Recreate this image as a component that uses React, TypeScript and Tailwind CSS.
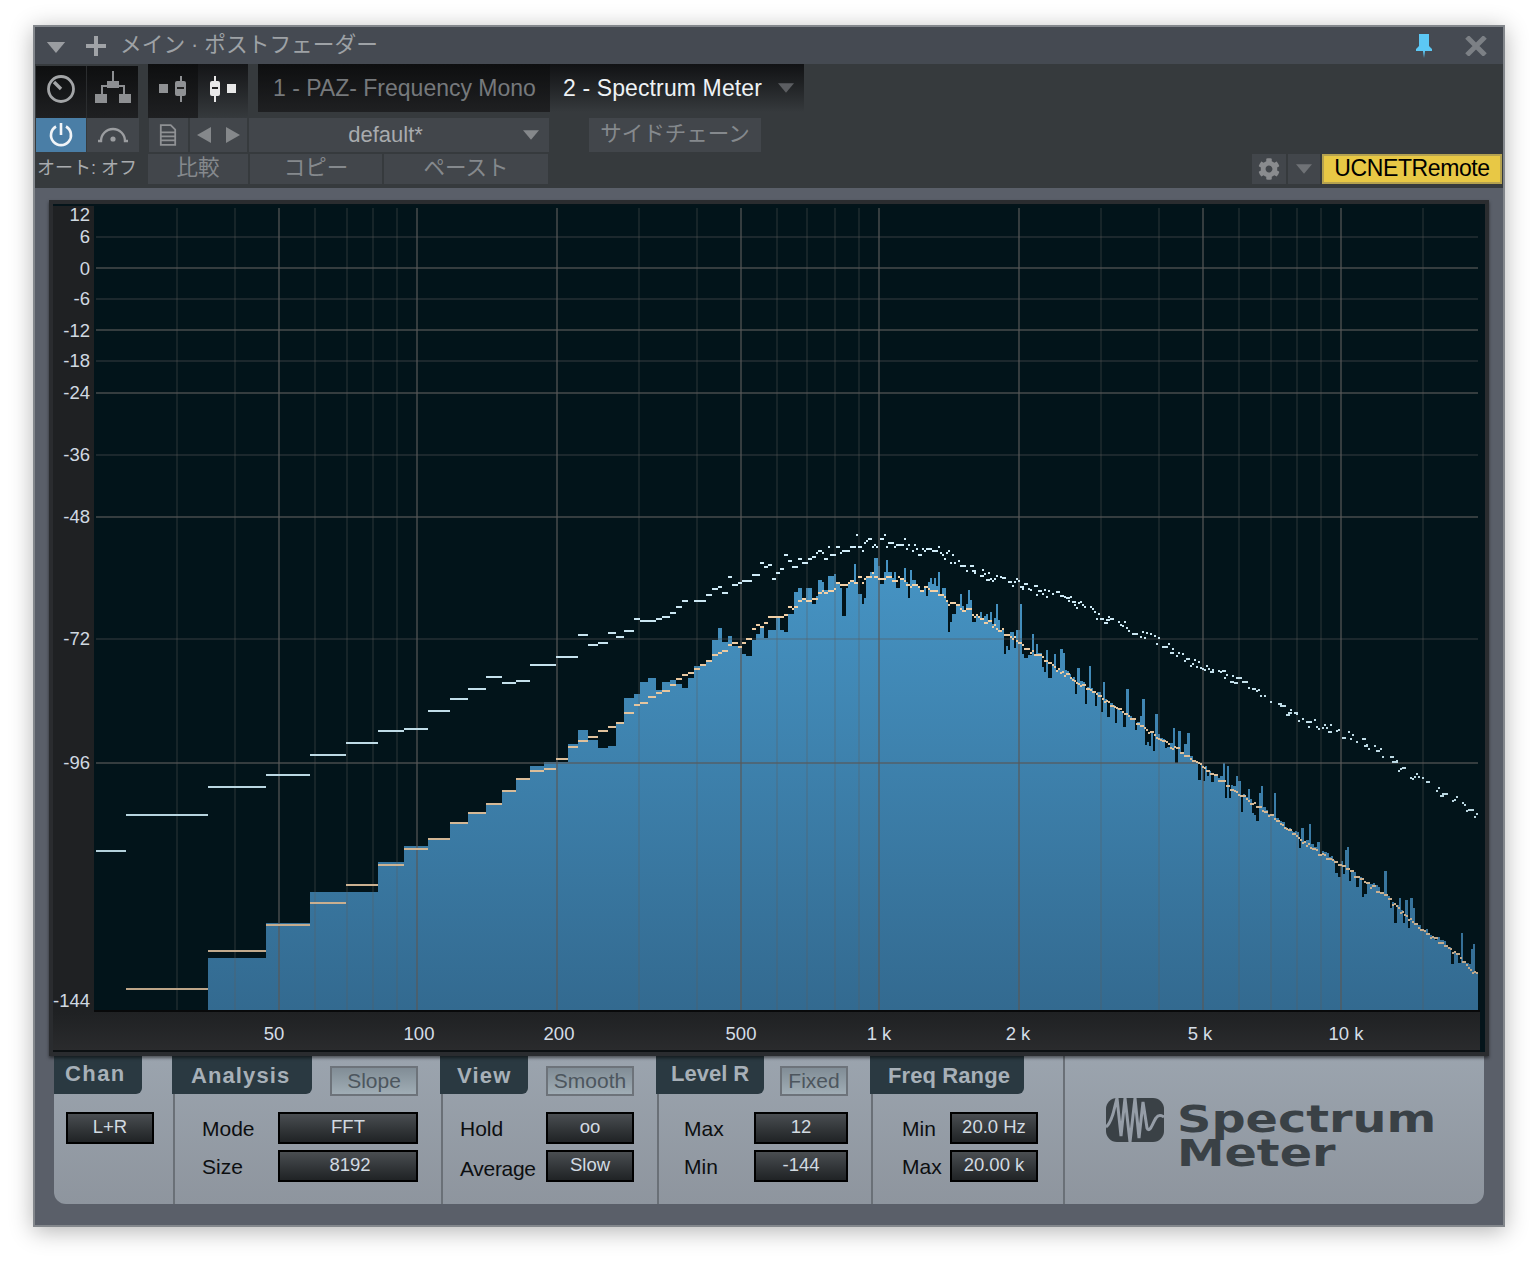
import React from "react";
import { FaCog } from "react-icons/fa";

const GRID_MINOR = [177, 235, 315, 347, 373, 397, 639, 697, 777, 807, 835, 859, 1101, 1159, 1239, 1271, 1297, 1321, 1423];
const GRID_MAJOR = [279, 417, 557, 741, 879, 1019, 1203, 1341];
const H_MINOR = [237, 299, 361, 455, 639];
const H_MAJOR = [268, 330, 393, 517, 763];
const Y_LABELS: [string, number][] = [["12", 215], ["6", 237], ["0", 269], ["-6", 299], ["-12", 331], ["-18", 361], ["-24", 393], ["-36", 455], ["-48", 517], ["-72", 639], ["-96", 763], ["-144", 1001]];
const X_LABELS: [string, number][] = [["50", 274], ["100", 419], ["200", 559], ["500", 741], ["1 k", 879], ["2 k", 1018], ["5 k", 1200], ["10 k", 1346]];

// blue: [xStart, top]
const BLUE_LOW: number[][] = [[208, 958], [266, 923], [310, 892], [378, 862], [404, 846], [428, 838], [450, 822], [468, 813], [486, 803], [502, 791], [516, 778], [530, 766], [544, 762], [568, 744], [578, 730], [588, 740], [598, 748], [608, 746], [616, 724], [624, 698], [634, 694], [640, 682], [648, 678], [656, 690], [662, 682], [670, 680], [676, 684], [682, 688], [688, 678], [694, 666], [700, 665], [706, 661]];
// zoomed 3x from (700,520)
const BLUE_Z = [36, 360, 54, 324, 66, 366, 84, 348, 96, 378, 126, 402, 138, 408, 156, 360, 168, 342, 180, 318, 192, 354, 204, 330, 228, 294, 240, 330, 252, 336, 264, 282, 282, 216, 294, 204, 306, 240, 318, 204, 336, 252, 348, 228, 354, 180, 366, 186, 372, 210, 384, 168, 402, 162, 408, 186, 420, 204, 426, 288, 438, 204, 444, 186, 450, 180, 462, 132, 468, 186, 474, 222, 486, 252, 492, 234, 498, 174, 510, 156, 522, 114, 534, 138, 540, 192, 552, 156, 558, 120, 564, 156, 576, 174, 582, 156, 588, 204, 600, 180, 612, 144, 618, 186, 624, 234, 630, 150, 636, 180, 648, 198, 660, 216, 672, 198, 678, 228, 684, 186, 690, 174, 696, 192, 702, 174, 708, 198, 714, 156, 720, 222, 726, 204, 738, 240, 744, 336, 750, 306, 756, 282, 768, 252, 780, 222, 786, 258, 792, 276, 798, 252, 804, 210, 810, 240, 816, 306, 828, 288, 840, 276, 846, 294, 852, 288, 858, 282, 864, 300, 870, 276, 876, 312, 882, 294, 888, 252, 894, 300, 900, 330, 912, 402, 918, 378, 924, 390, 930, 336, 942, 384, 948, 330, 954, 330, 960, 252, 966, 402, 972, 414, 984, 405, 996, 342, 1002, 408, 1008, 372, 1014, 400, 1026, 440, 1032, 456, 1038, 390, 1044, 474, 1056, 438, 1062, 402, 1068, 456, 1074, 444];

const ORANGE_LOW: number[][] = [[126, 208, 989], [208, 266, 951], [266, 310, 925], [310, 346, 903], [346, 378, 885], [378, 404, 865], [404, 428, 849], [428, 450, 839], [450, 468, 823], [468, 486, 813], [486, 502, 804], [502, 516, 791], [516, 530, 779], [530, 544, 771], [544, 556, 769], [556, 568, 759], [568, 578, 747], [578, 588, 741], [588, 598, 737], [598, 608, 731], [608, 616, 727], [616, 624, 723], [624, 634, 713], [634, 640, 705], [640, 648, 703], [648, 656, 697], [656, 662, 693], [662, 670, 691], [670, 676, 685], [676, 682, 679], [682, 688, 675], [688, 694, 673], [694, 700, 669]];
const ORANGE_Z = [0, 18, 435, 18, 36, 423, 36, 54, 405, 54, 66, 399, 66, 84, 393, 84, 96, 375, 96, 114, 369, 114, 126, 381, 126, 138, 369, 138, 156, 357, 156, 168, 327, 168, 180, 315, 180, 192, 321, 192, 204, 309, 204, 252, 291, 252, 264, 285, 264, 276, 261, 276, 282, 267, 282, 294, 261, 294, 306, 243, 306, 318, 237, 318, 336, 243, 336, 354, 237, 354, 366, 219, 366, 372, 213, 372, 384, 219, 384, 402, 213, 402, 408, 207, 408, 420, 189, 420, 444, 195, 444, 450, 189, 450, 462, 183, 462, 474, 189, 474, 486, 171, 486, 492, 189, 492, 498, 177, 498, 516, 171, 516, 522, 159, 522, 534, 171, 534, 558, 177, 558, 576, 171, 576, 594, 183, 594, 600, 171, 600, 612, 177, 612, 618, 183, 618, 630, 195, 630, 636, 201, 636, 654, 195, 654, 660, 201, 660, 672, 213, 672, 684, 201, 684, 690, 207, 690, 714, 213, 714, 732, 225, 732, 738, 231, 738, 744, 243, 744, 750, 255, 750, 768, 249, 768, 780, 255, 780, 786, 267, 786, 798, 273, 798, 816, 267, 816, 822, 285, 822, 828, 291, 828, 834, 285, 834, 840, 291, 840, 852, 297, 852, 864, 309, 864, 876, 303, 876, 882, 321, 882, 888, 315, 888, 894, 327, 894, 906, 333, 906, 912, 327, 912, 930, 345, 930, 936, 351, 936, 942, 357, 942, 948, 351, 948, 954, 363, 954, 966, 369, 966, 972, 375, 972, 990, 387, 990, 996, 399, 996, 1002, 393, 1002, 1008, 405, 1008, 1026, 405, 1026, 1032, 411, 1032, 1044, 423, 1044, 1056, 429, 1056, 1062, 435, 1062, 1068, 441, 1068, 1074, 453, 1074, 1080, 447];

const WHITE_LOW: number[][] = [[96, 126, 851], [126, 208, 815], [208, 266, 787], [266, 310, 775], [310, 346, 755], [346, 378, 743], [378, 404, 731], [404, 428, 729], [428, 450, 711], [450, 468, 699], [468, 486, 689], [486, 502, 677], [502, 516, 683], [516, 530, 681], [530, 556, 665], [556, 578, 657], [578, 588, 635], [588, 598, 645], [598, 608, 643], [608, 616, 633], [616, 624, 637], [624, 634, 631], [634, 640, 619], [640, 656, 621], [656, 662, 619], [662, 670, 617], [670, 676, 613], [676, 682, 607], [682, 688, 601], [694, 700, 601]];
const WHITE_Z = [0, 18, 243, 18, 36, 225, 36, 54, 207, 54, 66, 201, 66, 84, 219, 84, 96, 171, 96, 114, 195, 114, 126, 189, 126, 156, 183, 156, 180, 165, 180, 192, 129, 192, 204, 141, 204, 216, 135, 216, 228, 177, 228, 240, 159, 240, 252, 147, 252, 264, 105, 264, 276, 123, 276, 294, 141, 294, 306, 117, 306, 324, 129, 324, 336, 117, 336, 348, 111, 348, 354, 99, 354, 366, 93, 366, 372, 99, 372, 384, 117, 384, 390, 81, 390, 408, 105, 408, 420, 81, 420, 426, 99, 426, 450, 93, 450, 468, 81, 468, 474, 45, 474, 486, 81, 486, 492, 93, 492, 498, 69, 498, 504, 63, 504, 516, 57, 516, 522, 81, 522, 528, 75, 528, 534, 81, 540, 552, 57, 552, 558, 45, 558, 564, 81, 564, 582, 69, 582, 588, 81, 588, 612, 75, 612, 618, 57, 618, 624, 87, 624, 630, 75, 636, 642, 93, 642, 648, 75, 648, 654, 87, 654, 666, 105, 666, 672, 87, 672, 678, 93, 678, 696, 87, 696, 714, 93, 714, 720, 81, 720, 726, 99, 726, 732, 105, 732, 738, 117, 738, 744, 99, 744, 750, 93, 750, 756, 129, 756, 762, 105, 762, 768, 129];

const ORANGE_CURVE = [[1060, 671], [1080, 685], [1100, 697], [1113, 707], [1133, 720], [1160, 740], [1187, 757], [1203, 768], [1239, 795], [1271, 817], [1297, 837], [1321, 855], [1341, 866], [1380, 893], [1423, 932], [1440, 943], [1455, 953], [1478, 977]];
const WHITE_CURVE = [[957, 565], [1000, 581], [1019, 584], [1033, 590], [1050, 594], [1073, 602], [1100, 617], [1117, 623], [1140, 634], [1160, 642], [1180, 657], [1200, 667], [1220, 672], [1240, 683], [1260, 695], [1300, 720], [1327, 728], [1363, 742], [1380, 753], [1400, 768], [1433, 788], [1453, 797], [1478, 817]];

function interp(c: number[][], x: number) {
  for (let i = 1; i < c.length; i++) {
    if (x <= c[i][0]) {
      const t = (x - c[i - 1][0]) / (c[i][0] - c[i - 1][0]);
      return c[i - 1][1] + t * (c[i][1] - c[i - 1][1]);
    }
  }
  return c[c.length - 1][1];
}

function buildChart() {
  let seed = 12345;
  const rnd = () => {
    seed = (seed * 1664525 + 1013904223) % 4294967296;
    return seed / 4294967296;
  };
  const blue: number[][] = [...BLUE_LOW];
  for (let i = 0; i < BLUE_Z.length; i += 2) blue.push([700 + BLUE_Z[i] / 3, 520 + BLUE_Z[i + 1] / 3]);
  let x = 1060;
  while (x < 1478) {
    const w = rnd() < 0.4 ? 3 : 2;
    const base = interp(ORANGE_CURVE, x);
    const r = rnd();
    let top = base - 5 + rnd() * 5;
    if (r < 0.18) top = base - 9 - rnd() * 20;
    else if (r < 0.4) top = base + 3 + rnd() * 14;
    blue.push([x, Math.round(top)]);
    x += w;
  }
  let bluePath = "M208 1010";
  blue.forEach((b, i) => {
    const end = i + 1 < blue.length ? blue[i + 1][0] : 1478;
    bluePath += ` L${b[0]} ${b[1]} L${end} ${b[1]}`;
  });
  bluePath += " L1478 1010 Z";

  const seg = (a: number, b: number, y: number) => `M${a} ${y - 1}H${b}V${y + 1}H${a}Z`;
  let orange = ORANGE_LOW.map((o) => seg(o[0], o[1], o[2])).join("");
  for (let i = 0; i < ORANGE_Z.length; i += 3) orange += seg(700 + ORANGE_Z[i] / 3, 700 + ORANGE_Z[i + 1] / 3, 520 + ORANGE_Z[i + 2] / 3);
  x = 1060;
  while (x < 1478) {
    const w = rnd() < 0.35 ? 4 : 2;
    const y = Math.round(interp(ORANGE_CURVE, x) + (rnd() - 0.5) * 4);
    orange += seg(x, Math.min(x + w, 1478), y);
    x += w;
  }

  let white = WHITE_LOW.map((o) => seg(o[0], o[1], o[2])).join("");
  for (let i = 0; i < WHITE_Z.length; i += 3) white += seg(700 + WHITE_Z[i] / 3, 700 + WHITE_Z[i + 1] / 3, 520 + WHITE_Z[i + 2] / 3);
  x = 958;
  while (x < 1478) {
    const y = Math.round(interp(WHITE_CURVE, x) + (rnd() - 0.5) * 9);
    if (rnd() < 0.72) white += seg(x, x + (rnd() < 0.22 ? 4 : 2), y);
    x += 2;
  }
  return { bluePath, orange, white };
}

const CHART = buildChart();

function Chart() {
  return (
    <svg className="block w-[1386px] h-[806px]" viewBox="94 206 1386 806" shapeRendering="crispEdges">
      <defs>
        <linearGradient id="blueFill" gradientUnits="userSpaceOnUse" x1="0" y1="560" x2="0" y2="1010">
          <stop offset="0" stopColor="#4694c4" />
          <stop offset="1" stopColor="#336a90" />
        </linearGradient>
        <linearGradient id="orangeFill" gradientUnits="userSpaceOnUse" x1="0" y1="560" x2="0" y2="1000">
          <stop offset="0" stopColor="#f8d5aa" />
          <stop offset="1" stopColor="#bba488" />
        </linearGradient>
        <linearGradient id="whiteFill" gradientUnits="userSpaceOnUse" x1="0" y1="540" x2="0" y2="860">
          <stop offset="0" stopColor="#d2eefa" />
          <stop offset="1" stopColor="#b2d0da" />
        </linearGradient>
      </defs>
      <rect x="94" y="206" width="1386" height="804" fill="#02141a" />
      <path d={CHART.bluePath} fill="url(#blueFill)" />
      {GRID_MINOR.map((x) => (
        <rect key={x} x={x - 1} y="208" width="2" height="802" fill="#5a5a5a" fillOpacity="0.24" />
      ))}
      {GRID_MAJOR.map((x) => (
        <rect key={x} x={x - 1} y="208" width="2" height="802" fill="#585858" fillOpacity="0.6" />
      ))}
      {H_MINOR.map((y) => (
        <rect key={y} x="96" y={y - 1} width="1382" height="2" fill="#5a5a5a" fillOpacity="0.3" />
      ))}
      {H_MAJOR.map((y) => (
        <rect key={y} x="96" y={y - 1} width="1382" height="2" fill="#585858" fillOpacity="0.6" />
      ))}
      <path d={CHART.orange} fill="url(#orangeFill)" />
      <path d={CHART.white} fill="url(#whiteFill)" />
      <rect x="94" y="1010" width="1386" height="2" fill="#08090a" />
    </svg>
  );
}

const Tri = ({ className }: { className: string }) => (
  <svg className={className} viewBox="0 0 20 12">
    <path d="M0 0H20L10 12Z" fill="currentColor" />
  </svg>
);

function Fader({ on }: { on?: boolean }) {
  const c = on ? "#e8e8e8" : "#8f9194";
  return (
    <svg className="w-[34px] h-[28px]" viewBox="0 0 34 28">
      {on ? (
        <g>
          <rect x="8" y="1" width="2" height="26" fill={c} />
          <rect x="4" y="6" width="10" height="15" rx="2" fill={c} />
          <rect x="6" y="12" width="6" height="2" fill="#222" />
          <rect x="21" y="9" width="9" height="9" fill={c} />
        </g>
      ) : (
        <g>
          <rect x="3" y="9" width="9" height="9" fill={c} />
          <rect x="24" y="1" width="2" height="26" fill={c} />
          <rect x="19" y="6" width="11" height="15" rx="2" fill={c} />
          <rect x="21" y="12" width="7" height="2" fill="#222" />
        </g>
      )}
    </svg>
  );
}

function Toolbar() {
  const btn = "bg-[#42464b] flex items-center justify-center";
  const cjk = "text-[21.5px] pb-[2px] text-[#85898d]";
  return (
    <div className="h-[124px] bg-[#363a3d] pl-px flex flex-col">
      <div className="flex h-[54px] items-start">
        <div className="flex w-[102px] h-[54px] bg-gradient-to-b from-[#0e0f10] to-[#1f2022] border-t-2 border-[#363a3d]">
          <div className="w-[51px] flex items-center justify-center border-r border-[#2b2d2f] pb-[6px]">
            <svg className="w-[30px] h-[30px]" viewBox="0 0 30 30" fill="none" stroke="#a3a5a7" strokeWidth="2.8">
              <circle cx="15" cy="15" r="12.5" />
              <path d="M8 8L15 15" strokeWidth="3.4" />
            </svg>
          </div>
          <div className="w-[51px] flex items-center justify-center pb-[8px]">
            <svg className="w-[38px] h-[34px]" viewBox="0 0 38 34" fill="#8d8f92">
              <rect x="18" y="0" width="2" height="12" />
              <rect x="13" y="10" width="12" height="7" />
              <rect x="7" y="14" width="24" height="2" />
              <rect x="7" y="14" width="2" height="10" />
              <rect x="29" y="14" width="2" height="10" />
              <rect x="1" y="23" width="12" height="9" />
              <rect x="25" y="23" width="12" height="9" />
            </svg>
          </div>
        </div>
        <div className="flex ml-[10px] h-[54px] w-[100px]">
          <div className="w-[50px] flex items-center justify-center bg-gradient-to-b from-[#0e0f10] to-[#1f2022] pb-[4px]">
            <Fader />
          </div>
          <div className="w-[50px] flex items-center justify-center bg-gradient-to-b from-[#141517] to-[#363a3d] pb-[4px]">
            <Fader on />
          </div>
        </div>
        <div className="flex ml-[10px]">
          <div className="w-[292px] h-[48px] bg-gradient-to-b from-[#0e0f10] to-[#1f2022] pl-[15px] flex items-center text-[23px] text-[#76797c]">
            1 - PAZ- Frequency Mono
          </div>
          <div className="w-[254px] h-[48px] bg-gradient-to-b from-[#111214] to-[#363a3d] pl-[13px] flex items-center text-[23px] text-[#eef2f5] tracking-[0.12px]">
            2 - Spectrum Meter
            <Tri className="w-[16px] h-[10px] ml-[16px] text-[#5c5e62]" />
          </div>
        </div>
      </div>
      <div className="flex h-[34px]">
        <div className="w-[50px] bg-[#4a7ea6] flex items-center justify-center">
          <svg className="w-[26px] h-[26px]" viewBox="0 0 26 26" fill="none" stroke="#f0f4f7" strokeWidth="2.6">
            <path d="M8 4.5A10 10 0 1 0 18 4.5" />
            <path d="M13 1V13" />
          </svg>
        </div>
        <div className={`w-[52px] ml-px ${btn}`}>
          <svg className="w-[32px] h-[18px]" viewBox="0 0 32 18" fill="none" stroke="#9b9da0" strokeWidth="2.4">
            <path d="M1 15H4A12 12 0 0 1 28 15H31" />
            <circle cx="16" cy="13" r="2.6" fill="#9b9da0" stroke="none" />
          </svg>
        </div>
        <div className={`w-[39px] ml-[10px] ${btn} pr-[2px]`}>
          <svg className="w-[18px] h-[24px]" viewBox="0 0 20 24" fill="none" stroke="#8f9194" strokeWidth="2">
            <path d="M2 1H13L18 6V23H2Z" />
            <path d="M2 9H18M2 13.5H18M2 18H18" />
          </svg>
        </div>
        <div className={`w-[57px] ml-[2px] ${btn} gap-[15px]`}>
          <svg className="w-[14px] h-[16px]" viewBox="0 0 14 16">
            <path d="M14 0V16L0 8Z" fill="#85888b" />
          </svg>
          <svg className="w-[14px] h-[16px]" viewBox="0 0 14 16">
            <path d="M0 0V16L14 8Z" fill="#85888b" />
          </svg>
        </div>
        <div className={`w-[300px] ml-[2px] ${btn} relative text-[22px] text-[#a8abae] pb-[2px]`}>
          <span className="mr-[27px]">default*</span>
          <Tri className="absolute right-[10px] top-[12px] w-[16px] h-[10px] text-[#85888b]" />
        </div>
        <div className={`w-[172px] ml-[40px] ${btn} ${cjk} text-[#8e9295] whitespace-nowrap`}>サイドチェーン</div>
      </div>
      <div className="flex h-[30px] mt-[2px]">
        <div className="w-[102px] flex items-center justify-center text-[18px] text-[#a9acaf] whitespace-nowrap pb-[2px]">オート: オフ</div>
        <div className={`w-[100px] ml-[10px] ${btn} ${cjk} text-[#6f7377]`}>比較</div>
        <div className={`w-[132px] ml-[2px] ${btn} ${cjk}`}>コピー</div>
        <div className={`w-[164px] ml-[2px] ${btn} ${cjk} text-[#6f7377]`}>ペースト</div>
        <div className={`w-[34px] ml-auto ${btn}`}>
          <FaCog className="w-[22px] h-[22px] text-[#898b8e]" />
        </div>
        <div className={`w-[32px] ml-[2px] ${btn}`}>
          <Tri className="w-[16px] h-[10px] text-[#6f7276]" />
        </div>
        <div className="w-[180px] ml-[2px] mr-[1px] bg-[#e8c845] border-2 border-[#b5a24f] flex items-center justify-center text-[23px] text-black tracking-[-0.4px] pb-[1px]">
          UCNETRemote
        </div>
      </div>
    </div>
  );
}

function TabHead({ text, className }: { text: string; className: string }) {
  return <div className={`h-[38px] bg-[#2a3941] rounded-br-[6px] flex items-center shrink-0 font-bold text-[22px] whitespace-nowrap text-[#a7b0b8] ${className}`}>{text}</div>;
}

function Toggle({ text, className }: { text: string; className: string }) {
  return <div className={`h-[30px] mt-[10px] border-2 border-[#6d737a] bg-gradient-to-b from-[#818d96] to-[#a0adb5] flex items-center justify-center text-[21px] text-[#4d565e] ${className}`}>{text}</div>;
}

function DarkBtn({ text, className }: { text: string; className: string }) {
  return (
    <div className={`h-[32px] border-2 border-black bg-gradient-to-b from-[#4a4e52] to-[#202325] flex items-center justify-center text-[18.5px] pb-[2px] text-[#d2dae1] ${className}`}>
      {text}
    </div>
  );
}

function Row({ label, value, lw, bw, lc = "pt-[2px]" }: { label: string; value: string; lw: string; bw: string; lc?: string }) {
  return (
    <div className="flex items-center h-[32px]">
      <span className={`text-[21px] leading-[24px] text-[#0d0f11] ${lw} ${lc}`}>{label}</span>
      <DarkBtn text={value} className={`shrink-0 ${bw}`} />
    </div>
  );
}

function Panel() {
  const sec = "border-l-2 border-[#6a7077] shrink-0";
  return (
    <div className="ml-[5px] w-[1430px] h-[148px] rounded-b-[12px] bg-gradient-to-b from-[#9ba4ae] to-[#8e959e] flex overflow-hidden">
      <div className="w-[119px] shrink-0">
        <TabHead text="Chan" className="w-[88px] pl-[11px] pb-[4px] tracking-[1.4px]" />
        <div className="mt-[18px] ml-[12px]">
          <DarkBtn text="L+R" className="w-[88px]" />
        </div>
      </div>
      <div className={`w-[268px] ${sec}`}>
        <div className="flex h-[38px]">
          <TabHead text="Analysis" className="-ml-[3px] w-[140px] pl-[19px] tracking-[1.1px]" />
          <Toggle text="Slope" className="ml-[18px] w-[88px]" />
        </div>
        <div className="pl-[27px] mt-[18px] flex flex-col gap-[6px]">
          <Row label="Mode" value="FFT" lw="w-[76px]" bw="w-[140px]" />
          <Row label="Size" value="8192" lw="w-[76px]" bw="w-[140px] pl-[4px]" />
        </div>
      </div>
      <div className={`w-[216px] ${sec}`}>
        <div className="flex h-[38px]">
          <TabHead text="View" className="-ml-[3px] w-[88px] pl-[17px] tracking-[1.2px]" />
          <Toggle text="Smooth" className="ml-[18px] w-[88px]" />
        </div>
        <div className="pl-[17px] mt-[18px] flex flex-col gap-[6px]">
          <Row label="Hold" value="oo" lw="w-[86px]" bw="w-[88px]" />
          <Row label="Average" value="Slow" lw="w-[86px] tracking-[-0.3px]" bw="w-[88px]" lc="pt-[5px]" />
        </div>
      </div>
      <div className={`w-[214px] ${sec}`}>
        <div className="flex h-[38px]">
          <TabHead text="Level R" className="-ml-[3px] w-[108px] pl-[15px] pb-[4px]" />
          <Toggle text="Fixed" className="ml-[16px] w-[68px]" />
        </div>
        <div className="pl-[25px] mt-[18px] flex flex-col gap-[6px]">
          <Row label="Max" value="12" lw="w-[70px]" bw="w-[94px]" />
          <Row label="Min" value="-144" lw="w-[70px]" bw="w-[94px]" />
        </div>
      </div>
      <div className={`w-[192px] ${sec}`}>
        <TabHead text="Freq Range" className="-ml-[3px] w-[154px] pl-[18px] tracking-[0.1px]" />
        <div className="pl-[29px] mt-[18px] flex flex-col gap-[6px]">
          <Row label="Min" value="20.0 Hz" lw="w-[48px]" bw="w-[88px]" />
          <Row label="Max" value="20.00 k" lw="w-[48px]" bw="w-[88px]" />
        </div>
      </div>
      <div className={`w-[421px] ${sec} flex pl-[41px] pt-[42px]`}>
        <svg className="w-[58px] h-[44px] shrink-0" viewBox="0 0 58 44">
          <rect x="0" y="0" width="58" height="44" rx="11" fill="#3a4146" />
          <path d="M0 29C3 27 5 22 7 16L11 0L15 38L19 0L24 44L29 0L33 40L37 4L41 30C44 36 47 24 50 20C52 17 55 17 58 19" fill="none" stroke="#959da7" strokeWidth="3" />
        </svg>
        <div className="ml-[13px] font-['DejaVu_Sans'] font-bold text-[37px] leading-[34px] text-[#3a4146] origin-top-left scale-x-[1.29] mt-[5px]">
          <div>Spectrum</div>
          <div>Meter</div>
        </div>
      </div>
    </div>
  );
}

export default function App() {
  return (
    <div className="w-[1538px] h-[1268px] bg-white overflow-hidden pt-[25px] pl-[33px] font-['Liberation_Sans','Noto_Sans_CJK_JP',sans-serif]">
      <div className="w-[1472px] h-[1202px] border-2 border-[#83878c] shadow-[0_4px_22px_rgba(0,0,0,0.3)] flex flex-col box-border">
        <div className="h-[37px] shrink-0 bg-[#454a52] flex items-center text-[#9ea2a6]">
          <Tri className="ml-[11px] w-[20px] h-[11px] text-[#9a9da1] mt-[4px]" />
          <svg className="ml-[20px] w-[20px] h-[20px]" viewBox="0 0 20 20">
            <path d="M8 0H12V8H20V12H12V20H8V12H0V8H8Z" fill="#a0a3a7" />
          </svg>
          <span className="ml-[14px] text-[21.7px] whitespace-nowrap">メイン · ポストフェーダー</span>
          <svg className="ml-auto w-[16px] h-[24px]" viewBox="0 0 16 24">
            <path d="M3 0H13V12L16 15V17H9L8 24L7 17H0V15L3 12Z" fill="#5cc8f5" />
          </svg>
          <svg className="ml-[33px] mr-[16px] w-[22px] h-[20px]" viewBox="0 0 22 20">
            <path d="M2 1L20 19M20 1L2 19" stroke="#7c8085" strokeWidth="5" />
          </svg>
        </div>
        <Toolbar />
        <div className="flex-1 bg-[#5a5f69] pt-[12px] pl-[14px]">
          <div className="relative z-10 w-[1440px] h-[856px] border-4 border-[#2a2c2f] bg-[#04141a] pt-[2px] shadow-[0_2px_3px_rgba(0,0,0,0.5)]">
            <div className="flex h-[806px]">
              <div className="relative w-[41px] h-[806px] bg-[#1f2123] shrink-0">
                {Y_LABELS.map(([t, y]) => (
                  <span key={t} className="absolute right-[4px] leading-[18px] text-[18.5px] text-[#d0d9e1]" style={{ top: y - 206 - 9 }}>
                    {t}
                  </span>
                ))}
              </div>
              <Chart />
            </div>
            <div className="relative w-[1427px] h-[40px] bg-gradient-to-b from-[#1f2123] to-[#2a2b2d] border-b-2 border-[#0c1012]">
              {X_LABELS.map(([t, x]) => (
                <span key={t} className="absolute top-[12px] leading-[20px] text-[18.5px] text-[#d4dde6] -translate-x-1/2 whitespace-nowrap" style={{ left: x - 53 }}>
                  {t}
                </span>
              ))}
            </div>
          </div>
          <Panel />
        </div>
      </div>
    </div>
  );
}
